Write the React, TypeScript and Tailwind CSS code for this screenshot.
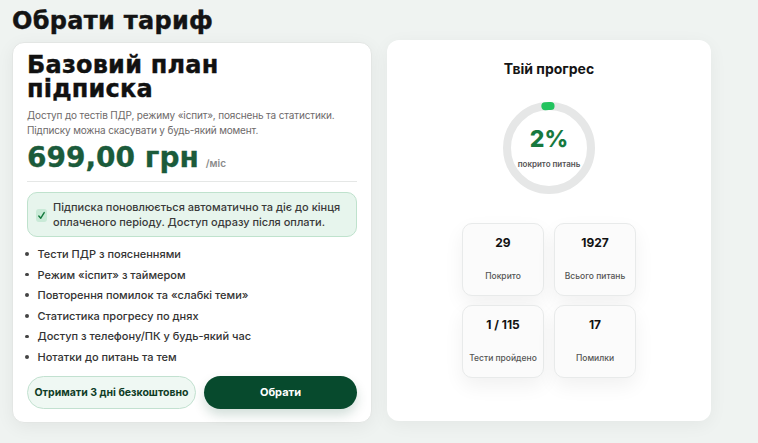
import React from 'react'

const FEATURES = [
  'Тести ПДР з поясненнями',
  'Режим «іспит» з таймером',
  'Повторення помилок та «слабкі теми»',
  'Статистика прогресу по днях',
  'Доступ з телефону/ПК у будь-який час',
  'Нотатки до питань та тем',
]

const STATS = [
  { value: '29', label: 'Покрито' },
  { value: '1927', label: 'Всього питань' },
  { value: '1 / 115', label: 'Тести пройдено' },
  { value: '17', label: 'Помилки' },
]

function ProgressRing({ percent }: { percent: number }) {
  const r = 42
  const c = 2 * Math.PI * r
  const len = Math.max((percent / 100) * c, 4)
  return (
    <div className="relative w-[92px] h-[92px]">
      <svg width="92" height="92" viewBox="0 0 92 92">
        <circle cx="46" cy="46" r={r} fill="none" stroke="#e6e7e7" strokeWidth="8" />
        <circle
          cx="46" cy="46" r={r} fill="none" stroke="#22c35e" strokeWidth="8" strokeLinecap="round"
          strokeDasharray={`${len} ${c}`} transform="rotate(-95 46 46)"
        />
      </svg>
      <div className="absolute inset-0 flex flex-col items-center justify-center">
        <span className="text-[23px] font-extrabold text-[#17793f] leading-none mt-[2px]">{percent}%</span>
        <span className="text-[8px] font-semibold text-[#555] mt-[7px]">покрито питань</span>
      </div>
    </div>
  )
}

export default function App() {
  return (
    <div className="w-[758px] h-[443px] overflow-hidden bg-[#eff3f1] text-[#1b1b1b]" style={{ fontFamily: 'Inter, "Noto Sans", sans-serif' }}>
      <h1 className="pl-[12px] pt-[7px] text-[24px] leading-[28px] font-extrabold tracking-[0.3px] text-[#141414]" style={{ fontFamily: '"DejaVu Sans", sans-serif', WebkitTextStroke: '0.4px #141414' }}>
        Обрати тариф
      </h1>

      <div className="flex gap-[15px] pl-[12px] mt-[5px] items-start">
        {/* plan card */}
        <section className="w-[360px] h-[381px] mt-[2px] bg-white rounded-[12px] border border-[#e3e6e4] shadow-[0_4px_18px_rgba(0,0,0,0.06)] px-[14px] pt-[10px]">
          <h2 className="text-[24px] leading-[24px] font-extrabold text-[#111] tracking-[0.2px]" style={{ fontFamily: '"DejaVu Sans", sans-serif', WebkitTextStroke: '0.4px #111' }}>
            Базовий план<br />підписка
          </h2>
          <p className="mt-[7px] text-[10px] leading-[15px] tracking-[-0.15px] text-[#6e6a6a] whitespace-nowrap">
            Доступ до тестів ПДР, режиму «іспит», пояснень та статистики.<br />
            Підписку можна скасувати у будь-який момент.
          </p>
          <div className="flex items-baseline mt-[4px]">
            <span className="text-[28px] leading-[32px] font-extrabold text-[#1b5b3b]" style={{ fontFamily: '"DejaVu Sans", sans-serif', WebkitTextStroke: '0.3px #1b5b3b' }}>699,00 грн</span>
            <span className="ml-[7px] text-[10px] font-semibold text-[#8a8a8a]">/міс</span>
          </div>
          <div className="mt-[7px] h-px bg-[#e5e7e6]" />

          <div className="mt-[10px] flex gap-[6px] bg-[#e7f5ed] border border-[#bfe2cd] rounded-[10px] pl-[8px] pr-[10px] py-[7px]">
            <span className="mt-[9px] w-[11px] h-[13px] shrink-0 rounded-[3px] bg-[#c9ead7] flex items-center justify-center">
              <svg width="9" height="9" viewBox="0 0 10 10">
                <path d="M2 5.5 L4.2 8 L8 1.8" fill="none" stroke="#157a3e" strokeWidth="1.6" strokeLinecap="round" strokeLinejoin="round" />
              </svg>
            </span>
            <p className="text-[11px] leading-[14.5px] font-medium text-[#3a3a3a]">
              Підписка поновлюється автоматично та діє до кінця оплаченого періоду. Доступ одразу після оплати.
            </p>
          </div>

          <ul className="mt-[10px] flex flex-col gap-[6.6px]">
            {FEATURES.map(f => (
              <li key={f} className="flex items-center gap-[9px] text-[11px] leading-[14px] font-medium text-[#333]">
                <span className="w-[3.5px] h-[3.5px] rounded-full bg-[#444] ml-[-2px]" />
                {f}
              </li>
            ))}
          </ul>

          <div className="mt-[12px] flex gap-[8px]">
            <button className="w-[169px] h-[33px] rounded-full bg-[#eff8f3] border border-[#c2e1d0] text-[10.5px] font-bold text-[#0f3d27]">
              Отримати 3 дні безкоштовно
            </button>
            <button className="flex-1 h-[33px] rounded-full bg-[#074a2d] text-[11px] font-bold text-white shadow-[0_6px_12px_rgba(7,74,45,0.18)]">
              Обрати
            </button>
          </div>
        </section>

        {/* progress card */}
        <section className="w-[324px] h-[381px] bg-white rounded-[12px] shadow-[0_4px_18px_rgba(0,0,0,0.05)] flex flex-col items-center pt-[20px]">
          <h3 className="text-[14px] font-bold text-[#151515] leading-[18px]">Твій прогрес</h3>
          <div className="mt-[24px]">
            <ProgressRing percent={2} />
          </div>
          <div className="mt-[29px] grid grid-cols-[82px_82px] gap-x-[10px] gap-y-[9px]">
            {STATS.map(s => (
              <div key={s.label} className="h-[73px] rounded-[10px] border border-[#e8eaea] bg-[#fbfbfb] shadow-[0_8px_20px_rgba(0,0,0,0.06)] flex flex-col items-center pt-[12px]">
                <span className="text-[12px] font-bold text-[#111] leading-[14px]">{s.value}</span>
                <span className="mt-[21px] text-[8.5px] font-medium text-[#555] leading-[10px]">{s.label}</span>
              </div>
            ))}
          </div>
        </section>
      </div>
    </div>
  )
}
